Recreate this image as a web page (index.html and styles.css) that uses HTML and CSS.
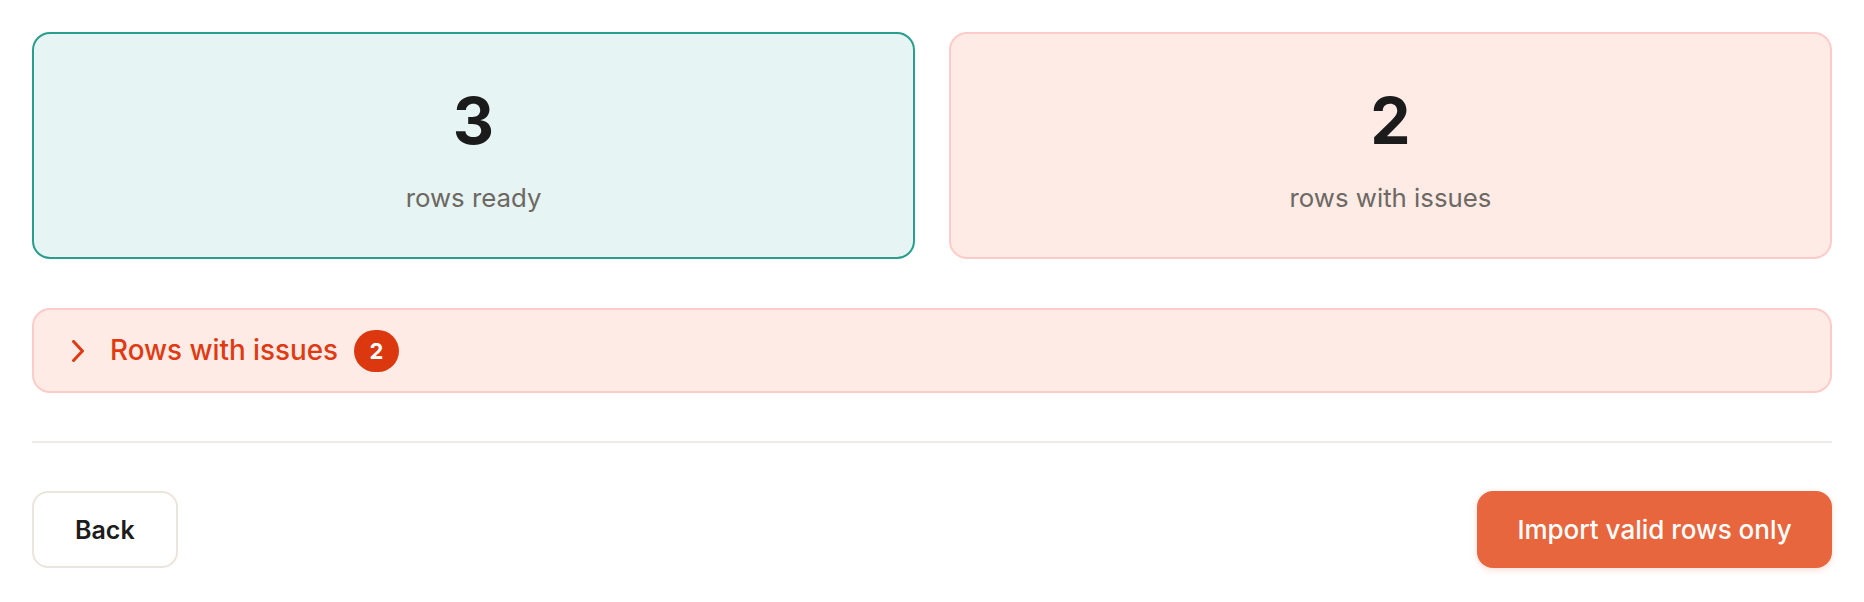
FILE: index.html
```html
<!DOCTYPE html>
<html lang="en">
<head>
<meta charset="utf-8">
<title>Import review</title>
<link rel="stylesheet" href="styles.css">
</head>
<body>
<main class="page">
  <section class="stats">
    <div class="stat stat-ok">
      <div class="stat-num">3</div>
      <div class="stat-label">rows ready</div>
    </div>
    <div class="stat stat-bad">
      <div class="stat-num">2</div>
      <div class="stat-label">rows with issues</div>
    </div>
  </section>

  <button class="issues" type="button">
    <svg class="chev" width="12" height="22" viewBox="0 0 12 22" aria-hidden="true">
      <path d="M1.6 1.6 L10.4 11 L1.6 20.4" fill="none" stroke="currentColor" stroke-width="3" stroke-linecap="square" stroke-linejoin="miter"/>
    </svg>
    <span class="issues-title">Rows with issues</span>
    <span class="badge">2</span>
  </button>

  <hr class="divider">

  <footer class="actions">
    <button class="btn btn-back" type="button">Back</button>
    <button class="btn btn-primary" type="button">Import valid rows only</button>
  </footer>
</main>
</body>
</html>
```

FILE: styles.css
```css
* { box-sizing: border-box; }

html, body {
  margin: 0;
  background: #ffffff;
}

body {
  font-family: "Inter", "Liberation Sans", sans-serif;
  color: #1c1c1c;
}

.page {
  padding: 32px;
  display: flex;
  flex-direction: column;
}

.stats {
  display: grid;
  grid-template-columns: 1fr 1fr;
  gap: 34px;
}

.stat {
  border: 2px solid;
  border-radius: 18px;
  padding: 55px 20px 41px;
  display: flex;
  flex-direction: column;
  align-items: center;
  gap: 27px;
}

.stat-ok {
  background: #e6f4f3;
  border-color: #2a9d8f;
}

.stat-bad {
  background: #feebe6;
  border-color: #fdccc8;
}

.stat-num {
  font-size: 64px;
  line-height: 64px;
  font-weight: 700;
  color: #1b1b1b;
}

.stat-label {
  font-size: 25.8px;
  line-height: 36px;
  color: #6d6862;
}

.issues {
  margin-top: 49px;
  height: 85px;
  width: 100%;
  background: #feebe6;
  border: 2px solid #fdccc8;
  border-radius: 18px;
  display: flex;
  align-items: center;
  padding: 0 0 0 38px;
  font-family: inherit;
  color: #e03a12;
  cursor: pointer;
  text-align: left;
}

.chev {
  display: block;
  flex: none;
}

.issues-title {
  margin-left: 26px;
  font-size: 27.8px;
  font-weight: 500;
  line-height: 1;
}

.badge {
  margin-left: 16px;
  width: 45px;
  height: 42px;
  border-radius: 21px;
  background: #dc3810;
  color: #ffffff;
  font-size: 22px;
  font-weight: 700;
  display: flex;
  align-items: center;
  justify-content: center;
}

.divider {
  margin: 48px 0 0;
  border: 0;
  height: 2px;
  background: #eeeae5;
}

.actions {
  margin-top: 48px;
  display: flex;
  justify-content: space-between;
  align-items: center;
}

.btn {
  height: 77px;
  border-radius: 16px;
  font-family: inherit;
  cursor: pointer;
}

.btn-back {
  padding: 0 41px;
  background: #ffffff;
  border: 2px solid #ebe5dc;
  color: #1c1c1c;
  font-size: 25px;
  font-weight: 600;
}

.btn-primary {
  padding: 0 30px;
  width: 355px;
  background: #e8663d;
  border: 0;
  color: #ffffff;
  font-size: 26px;
  font-weight: 500;
  box-shadow: 0 2px 6px rgba(232, 102, 61, 0.22);
}
```
